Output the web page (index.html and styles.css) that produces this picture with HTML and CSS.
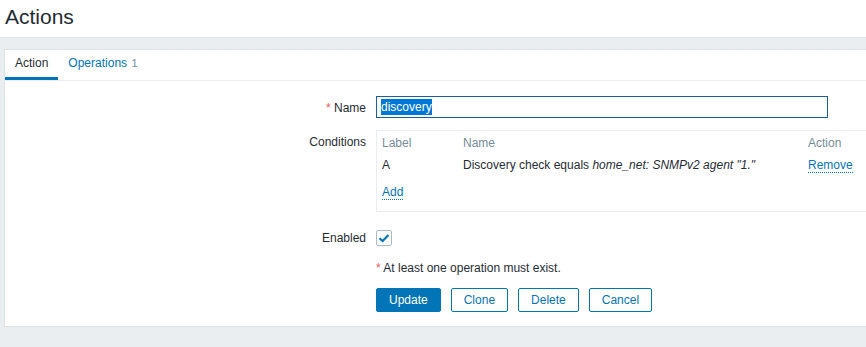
FILE: index.html
```html
<!DOCTYPE html>
<html lang="en">
<head>
    <meta charset="UTF-8">
    <title>Actions</title>
    <link rel="stylesheet" href="styles.css">
</head>
<body>

    <header class="header">
        <h1 class="title">Actions</h1>
    </header>

    <div class="panel">
        <ul class="tabs">
            <li class="tab active">Action</li>
            <li class="tab">Operations <span class="count">1</span></li>
        </ul>

        <div class="form">
            <div class="row row-name">
                <label class="label"><span class="req">*</span> Name</label>
                <div class="field">
                    <div class="input"><span class="selected">discovery</span></div>
                </div>
            </div>

            <div class="row row-conditions">
                <label class="label">Conditions</label>
                <div class="field">
                    <div class="conditions">
                        <table class="cond-table">
                            <tr class="cond-head">
                                <td class="col-label">Label</td>
                                <td class="col-name">Name</td>
                                <td class="col-action">Action</td>
                            </tr>
                            <tr>
                                <td>A</td>
                                <td>Discovery check equals <em>home_net: SNMPv2 agent "1."</em></td>
                                <td><a class="link">Remove</a></td>
                            </tr>
                        </table>
                        <div class="add"><a class="link">Add</a></div>
                    </div>
                </div>
            </div>

            <div class="row row-enabled">
                <label class="label">Enabled</label>
                <div class="field">
                    <span class="checkbox">
                        <svg width="12" height="10" viewBox="0 0 12 10">
                            <path d="M1.5 5.2 L4.6 8 L10.5 2" fill="none" stroke="#0275b8" stroke-width="2.2"/>
                        </svg>
                    </span>
                </div>
            </div>

            <div class="row row-msg">
                <div class="label"></div>
                <div class="field msg"><span class="req">*</span> At least one operation must exist.</div>
            </div>

            <div class="row row-buttons">
                <div class="label"></div>
                <div class="field buttons">
                    <button class="btn primary">Update</button>
                    <button class="btn">Clone</button>
                    <button class="btn">Delete</button>
                    <button class="btn">Cancel</button>
                </div>
            </div>
        </div>
    </div>

</body>
</html>
```

FILE: styles.css
```css
body{
    margin: 0;
    padding: 0;
    background: #ebeef0;
    font-family: "Liberation Sans", Arial, sans-serif;
    font-size: 12px;
    color: #1f2c33;
    overflow: hidden;
}

.header{
    background: white;
    height: 37px;
    border-bottom: 1px solid #e2e6e9;
}

.title{
    margin: 0;
    padding: 4px 0 0 5px;
    font-size: 21px;
    font-weight: normal;
    line-height: 26px;
}

/* panel runs on past the right edge of the window */
.panel{
    margin: 11px 0 0 4px;
    background: white;
    border: 1px solid #dfe4e7;
    border-right: none;
    padding-bottom: 14px;
}

.tabs{
    list-style: none;
    margin: 0;
    padding: 0;
    display: flex;
    height: 30px;
    border-bottom: 1px solid #ebeef0;
}

.tab{
    padding: 0 10px;
    line-height: 27px;
    color: #0275b8;
    border-bottom: 3px solid transparent;
}

.tab.active{
    color: #1f2c33;
    border-bottom-color: #0275b8;
}

.count{
    color: #768d99;
    font-size: 11px;
    margin-left: 1px;
}

.form{
    padding-top: 15px;
}

.row{
    display: grid;
    grid-template-columns: 371px 1fr;
}

.label{
    text-align: right;
    padding-right: 10px;
    line-height: 22px;
}

.row-name .label{
    padding-top: 1px;
}

.req{
    color: #e45959;
}

.input{
    width: 446px;
    height: 20px;
    border: 1px solid #1b5f99;
    padding: 0 0 0 4px;
    line-height: 20px;
}

.selected{
    background: #0078d7;
    color: white;
    padding: 1px 0;
}

.row-conditions{
    margin-top: 11px;
}

.row-conditions .label{
    line-height: 20px;
    padding-top: 2px;
}

.conditions{
    border: 1px solid #ebeef0;
    border-right: none;
    padding: 1px 5px 8px;
}

.cond-table{
    border-collapse: collapse;
}

.cond-table td{
    padding: 4px 0;
    line-height: 14px;
    white-space: nowrap;
}

.cond-head td{
    color: #768d99;
}

.col-label{
    width: 81px;
}

.col-name{
    width: 345px;
}

.link{
    color: #0275b8;
    border-bottom: 1px dotted #0275b8;
}

.add{
    margin-top: 5px;
    padding: 4px 0;
    line-height: 14px;
}

.row-enabled{
    margin-top: 15px;
}

.checkbox{
    display: flex;
    align-items: center;
    justify-content: center;
    width: 14px;
    height: 14px;
    margin-top: 3px;
    border: 1px solid #acbbc2;
    border-radius: 2px;
}

.row-msg{
    margin-top: 8px;
}

.msg{
    line-height: 22px;
}

.row-buttons{
    margin-top: 9px;
}

.buttons{
    display: flex;
    gap: 10px;
}

.btn{
    font-family: inherit;
    font-size: 12px;
    height: 24px;
    padding: 0 12px;
    border: 1px solid #0275b8;
    border-radius: 2px;
    background: white;
    color: #0275b8;
}

.btn.primary{
    background: #0275b8;
    color: white;
}
```
